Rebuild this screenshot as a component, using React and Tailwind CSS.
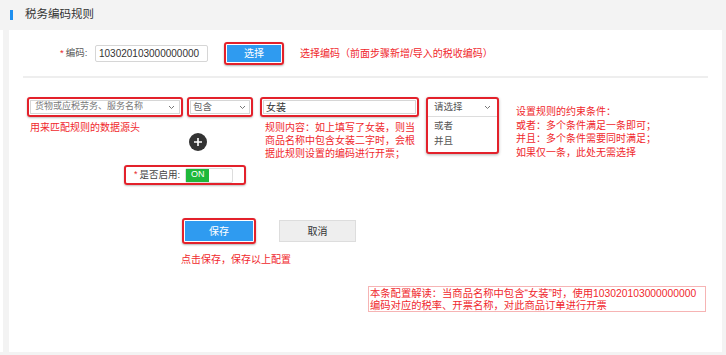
import React from 'react';

const Chevron = () => (
  <svg width="7" height="5" viewBox="0 0 7 5" className="shrink-0">
    <polyline points="1,1 3.5,3.5 6,1" fill="none" stroke="#777" strokeWidth="1" />
  </svg>
);

const App = () => {
  return (
    <div className="w-[726px] h-[355px] bg-[#f3f3f3] overflow-hidden font-['Liberation_Sans','Noto_Sans_CJK_SC',sans-serif]">
      {/* header */}
      <div className="h-[30px] flex items-center pl-[10px]">
        <span className="w-[3px] h-[10px] bg-[#1e8ff0]" />
        <span className="ml-[12px] text-[11.5px] text-[#333]">税务编码规则</span>
      </div>

      <div className="flex">
        <div className="w-[3px] h-[322px] bg-white" />
        {/* panel */}
        <div className="ml-[6px] w-[713px] h-[322px] bg-white pt-[12px]">
          {/* code row */}
          <div className="flex items-center h-[23px]">
            <div className="ml-[51px] w-[35px] flex items-center text-[9.5px] text-[#555]">
              <span className="text-[#e8262a] mr-[2px]">*</span>编码:
            </div>
            <div className="w-[113px] h-[17px] border border-[#d6d6d6] rounded-[2px] flex items-center pl-[3px] text-[10px] text-[#333]">
              103020103000000000
            </div>
            <div className="ml-[16px] w-[60px] h-[23px] border-2 border-[#e3212b] rounded-[3px] p-[1px] shadow-[0_1px_2px_rgba(0,0,0,0.3)]">
              <div className="w-full h-full bg-[#2f9bf0] flex items-center justify-center text-[10px] text-white">选择</div>
            </div>
            <div className="ml-[16px] text-[10px] text-[#f0282d]">选择编码（前面步骤新增/导入的税收编码）</div>
          </div>

          <div className="mt-[11px] ml-[14px] w-[685px] h-[2px] bg-[#eeeeee]" />

          {/* rule row */}
          <div className="mt-[19px] ml-[18px] flex items-start">
            <div className="w-[156px]">
              <div className="h-[20px] border-2 border-[#e3212b] rounded-[3px] p-[1px] shadow-[0_1px_2px_rgba(0,0,0,0.25)]">
                <div className="h-full border border-[#d6d6d6] flex items-center justify-between pl-[4px] pr-[4px] text-[9px] text-[#777]">
                  <span>货物或应税劳务、服务名称</span>
                  <Chevron />
                </div>
              </div>
              <div className="mt-[4px] pl-[3px] text-[10px] leading-[13px] text-[#f0282d]">用来匹配规则的数据源头</div>
            </div>

            <div className="ml-[4px] w-[66px]">
              <div className="h-[20px] border-2 border-[#e3212b] rounded-[3px] p-[1px] shadow-[0_1px_2px_rgba(0,0,0,0.25)]">
                <div className="h-full border border-[#d6d6d6] flex items-center justify-between pl-[2px] pr-[3px] text-[9.5px] text-[#666]">
                  <span>包含</span>
                  <Chevron />
                </div>
              </div>
              <div className="mt-[16px] ml-[2px] w-[18px] h-[18px] rounded-full bg-[#333] flex items-center justify-center">
                <svg width="10" height="10" viewBox="0 0 10 10">
                  <path d="M5 1v8M1 5h8" stroke="#fff" strokeWidth="1.6" />
                </svg>
              </div>
            </div>

            <div className="ml-[7px] w-[159px]">
              <div className="h-[20px] border-2 border-[#e3212b] rounded-[3px] p-[1px] shadow-[0_1px_2px_rgba(0,0,0,0.25)]">
                <div className="h-full border border-[#d6d6d6] flex items-center pl-[2px] text-[10px] text-[#333]">女装</div>
              </div>
              <div className="mt-[4px] pl-[5px] text-[10px] leading-[13px] text-[#f0282d] whitespace-nowrap">
                规则内容：如上填写了女装，则当<br />
                商品名称中包含女装二字时，会根<br />
                据此规则设置的编码进行开票；
              </div>
            </div>

            <div className="ml-[7px] w-[73px] h-[57px] border-2 border-[#e3212b] rounded-[3px] shadow-[0_1px_3px_rgba(0,0,0,0.3)] bg-white">
              <div className="h-[18px] border-b border-[#dddddd] flex items-center justify-between px-[6px] text-[9.5px] text-[#555]">
                <span>请选择</span>
                <Chevron />
              </div>
              <div className="pt-[2px] text-[9.5px] text-[#555]">
                <div className="h-[15px] flex items-center px-[6px]">或者</div>
                <div className="h-[15px] flex items-center px-[6px]">并且</div>
              </div>
            </div>

            <div className="ml-[17px] mt-[8px] text-[10px] leading-[13.5px] text-[#f0282d] whitespace-nowrap">
              设置规则的约束条件：<br />
              或者：多个条件满足一条即可；<br />
              并且：多个条件需要同时满足；<br />
              如果仅一条，此处无需选择
            </div>
          </div>

          {/* enable row */}
          <div className="mt-[5px] ml-[115px] w-[122px] h-[20px] border-2 border-[#e3212b] rounded-[3px] shadow-[0_1px_2px_rgba(0,0,0,0.25)] flex items-center pl-[8px]">
            <span className="text-[9px] text-[#e8262a] mr-[2px]">*</span>
            <span className="text-[9.5px] text-[#444]">是否启用:</span>
            <div className="ml-[5px] w-[48px] h-[15px] border border-[#dddddd] rounded-[2px] flex">
              <div className="w-[23px] h-full bg-[#1fb83a] flex items-center justify-center text-[9px] text-white">ON</div>
            </div>
          </div>

          {/* buttons */}
          <div className="mt-[33px] ml-[173px] flex items-center">
            <div className="w-[74px] h-[26px] border-2 border-[#e3212b] rounded-[3px] p-[1px] shadow-[0_1px_2px_rgba(0,0,0,0.3)]">
              <div className="w-full h-full bg-[#2f9bf0] flex items-center justify-center text-[10px] text-white">保存</div>
            </div>
            <div className="ml-[23px] w-[77px] h-[22px] bg-[#eeeeee] border border-[#dddddd] flex items-center justify-center text-[10px] text-[#333]">取消</div>
          </div>
          <div className="mt-[9px] ml-[172px] text-[10px] leading-[13px] text-[#f0282d]">点击保存，保存以上配置</div>

          {/* explanation */}
          <div className="mt-[20px] ml-[359px] w-[338px] h-[26px] border border-[#f6b4b4] px-[1px] pt-[1px] text-[10.3px] leading-[12px] text-[#f0282d] whitespace-nowrap">
            本条配置解读：当商品名称中包含“女装”时，使用103020103000000000<br />
            编码对应的税率、开票名称，对此商品订单进行开票
          </div>
        </div>
      </div>
    </div>
  );
};

export default App;
